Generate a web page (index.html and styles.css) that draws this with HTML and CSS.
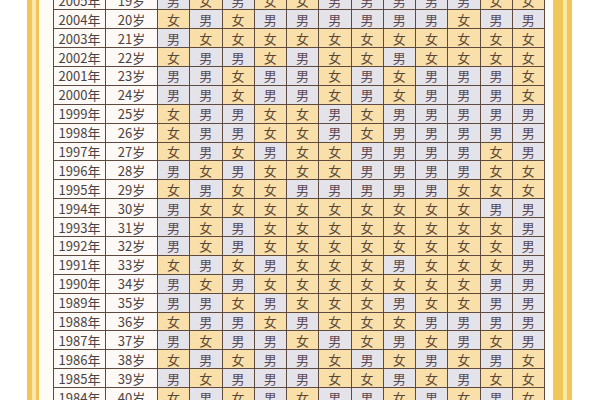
FILE: index.html
```html
<!DOCTYPE html>
<html lang="zh">
<head>
<meta charset="utf-8">
<title>清宫表</title>
<link rel="stylesheet" href="styles.css">
</head>
<body>
<div class="frame">
  <div class="band-outer-l"></div><div class="band-pale-l"></div><div class="band-inner-l"></div>
  <div class="inner">
    <div class="chart">
      <div class="y">2005年</div><div class="a">19岁</div><div class="m">男</div><div class="f">女</div><div class="m">男</div><div class="f">女</div><div class="f">女</div><div class="m">男</div><div class="m">男</div><div class="m">男</div><div class="m">男</div><div class="m">男</div><div class="f">女</div><div class="f">女</div>
      <div class="y">2004年</div><div class="a">20岁</div><div class="f">女</div><div class="m">男</div><div class="f">女</div><div class="m">男</div><div class="m">男</div><div class="m">男</div><div class="m">男</div><div class="m">男</div><div class="m">男</div><div class="f">女</div><div class="m">男</div><div class="m">男</div>
      <div class="y">2003年</div><div class="a">21岁</div><div class="m">男</div><div class="f">女</div><div class="f">女</div><div class="f">女</div><div class="f">女</div><div class="f">女</div><div class="f">女</div><div class="f">女</div><div class="f">女</div><div class="f">女</div><div class="f">女</div><div class="f">女</div>
      <div class="y">2002年</div><div class="a">22岁</div><div class="f">女</div><div class="m">男</div><div class="m">男</div><div class="f">女</div><div class="m">男</div><div class="f">女</div><div class="f">女</div><div class="m">男</div><div class="f">女</div><div class="f">女</div><div class="f">女</div><div class="f">女</div>
      <div class="y">2001年</div><div class="a">23岁</div><div class="m">男</div><div class="m">男</div><div class="f">女</div><div class="m">男</div><div class="m">男</div><div class="f">女</div><div class="m">男</div><div class="f">女</div><div class="m">男</div><div class="m">男</div><div class="m">男</div><div class="f">女</div>
      <div class="y">2000年</div><div class="a">24岁</div><div class="m">男</div><div class="m">男</div><div class="f">女</div><div class="m">男</div><div class="m">男</div><div class="f">女</div><div class="m">男</div><div class="f">女</div><div class="m">男</div><div class="m">男</div><div class="m">男</div><div class="f">女</div>
      <div class="y">1999年</div><div class="a">25岁</div><div class="f">女</div><div class="m">男</div><div class="m">男</div><div class="f">女</div><div class="f">女</div><div class="m">男</div><div class="f">女</div><div class="m">男</div><div class="m">男</div><div class="m">男</div><div class="m">男</div><div class="m">男</div>
      <div class="y">1998年</div><div class="a">26岁</div><div class="f">女</div><div class="m">男</div><div class="m">男</div><div class="f">女</div><div class="f">女</div><div class="m">男</div><div class="f">女</div><div class="m">男</div><div class="m">男</div><div class="m">男</div><div class="m">男</div><div class="m">男</div>
      <div class="y">1997年</div><div class="a">27岁</div><div class="f">女</div><div class="m">男</div><div class="f">女</div><div class="m">男</div><div class="f">女</div><div class="f">女</div><div class="m">男</div><div class="m">男</div><div class="m">男</div><div class="m">男</div><div class="f">女</div><div class="m">男</div>
      <div class="y">1996年</div><div class="a">28岁</div><div class="m">男</div><div class="f">女</div><div class="m">男</div><div class="f">女</div><div class="f">女</div><div class="f">女</div><div class="m">男</div><div class="m">男</div><div class="m">男</div><div class="m">男</div><div class="f">女</div><div class="f">女</div>
      <div class="y">1995年</div><div class="a">29岁</div><div class="f">女</div><div class="m">男</div><div class="f">女</div><div class="f">女</div><div class="m">男</div><div class="m">男</div><div class="m">男</div><div class="m">男</div><div class="m">男</div><div class="f">女</div><div class="f">女</div><div class="f">女</div>
      <div class="y">1994年</div><div class="a">30岁</div><div class="m">男</div><div class="f">女</div><div class="f">女</div><div class="f">女</div><div class="f">女</div><div class="f">女</div><div class="f">女</div><div class="f">女</div><div class="f">女</div><div class="f">女</div><div class="m">男</div><div class="m">男</div>
      <div class="y">1993年</div><div class="a">31岁</div><div class="m">男</div><div class="f">女</div><div class="m">男</div><div class="f">女</div><div class="f">女</div><div class="f">女</div><div class="f">女</div><div class="f">女</div><div class="f">女</div><div class="f">女</div><div class="f">女</div><div class="m">男</div>
      <div class="y">1992年</div><div class="a">32岁</div><div class="m">男</div><div class="f">女</div><div class="m">男</div><div class="f">女</div><div class="f">女</div><div class="f">女</div><div class="f">女</div><div class="f">女</div><div class="f">女</div><div class="f">女</div><div class="f">女</div><div class="m">男</div>
      <div class="y">1991年</div><div class="a">33岁</div><div class="f">女</div><div class="m">男</div><div class="f">女</div><div class="m">男</div><div class="f">女</div><div class="f">女</div><div class="f">女</div><div class="m">男</div><div class="f">女</div><div class="f">女</div><div class="f">女</div><div class="m">男</div>
      <div class="y">1990年</div><div class="a">34岁</div><div class="m">男</div><div class="f">女</div><div class="m">男</div><div class="f">女</div><div class="f">女</div><div class="f">女</div><div class="f">女</div><div class="f">女</div><div class="f">女</div><div class="f">女</div><div class="m">男</div><div class="m">男</div>
      <div class="y">1989年</div><div class="a">35岁</div><div class="m">男</div><div class="m">男</div><div class="f">女</div><div class="m">男</div><div class="f">女</div><div class="f">女</div><div class="f">女</div><div class="m">男</div><div class="f">女</div><div class="f">女</div><div class="m">男</div><div class="m">男</div>
      <div class="y">1988年</div><div class="a">36岁</div><div class="f">女</div><div class="m">男</div><div class="m">男</div><div class="f">女</div><div class="m">男</div><div class="f">女</div><div class="f">女</div><div class="f">女</div><div class="m">男</div><div class="m">男</div><div class="m">男</div><div class="m">男</div>
      <div class="y">1987年</div><div class="a">37岁</div><div class="m">男</div><div class="f">女</div><div class="m">男</div><div class="m">男</div><div class="f">女</div><div class="m">男</div><div class="f">女</div><div class="m">男</div><div class="f">女</div><div class="m">男</div><div class="f">女</div><div class="m">男</div>
      <div class="y">1986年</div><div class="a">38岁</div><div class="f">女</div><div class="m">男</div><div class="f">女</div><div class="m">男</div><div class="m">男</div><div class="f">女</div><div class="m">男</div><div class="f">女</div><div class="m">男</div><div class="f">女</div><div class="m">男</div><div class="f">女</div>
      <div class="y">1985年</div><div class="a">39岁</div><div class="m">男</div><div class="f">女</div><div class="m">男</div><div class="m">男</div><div class="m">男</div><div class="f">女</div><div class="f">女</div><div class="m">男</div><div class="f">女</div><div class="m">男</div><div class="f">女</div><div class="f">女</div>
      <div class="y">1984年</div><div class="a">40岁</div><div class="f">女</div><div class="m">男</div><div class="f">女</div><div class="m">男</div><div class="f">女</div><div class="m">男</div><div class="m">男</div><div class="f">女</div><div class="m">男</div><div class="f">女</div><div class="m">男</div><div class="f">女</div>
    </div>
  </div>
  <div class="band-inner-r"></div><div class="band-pale-r"></div><div class="band-outer-r"></div>
</div>
</body>
</html>
```

FILE: styles.css
```css
html, body {
  margin: 0;
  padding: 0;
  background: #ffffff;
  overflow: hidden;
}

body {
  font-family: "Noto Sans CJK SC", "Noto Sans", sans-serif;
}

.frame {
  display: flex;
  margin-left: 27px;
  width: 546px;
  height: 400px;
  align-items: stretch;
}

.band-outer-l { width: 5px; background: #f1c75a; }
.band-pale-l { width: 4px; background: #fbe7a6; }
.band-inner-l { width: 3px; background: #f0c65c; }

.band-inner-r { width: 10px; background: #f1c75a; }
.band-pale-r { width: 4px; background: #fbe7a6; }
.band-outer-r { width: 5px; background: #f1c75a; }

.inner {
  background: #fefcf4;
  padding: 0 8px 0 14px;
  overflow: hidden;
}

.chart {
  margin-top: -9.6px;
  width: 492px;
  display: grid;
  grid-template-columns: 51px 51px repeat(12, 1fr);
  grid-auto-rows: 17.9px;
  gap: 1px;
  background: #5e4a3e;
  border: 1px solid #5e4a3e;
  box-sizing: border-box;
}

.chart > div {
  display: flex;
  align-items: center;
  justify-content: center;
  font-size: 13px;
  line-height: 1;
}

.y, .a {
  background: #fcf9f6;
  color: #4a4343;
}

.f {
  background: #f9dfaa;
  color: #5a4634;
}

.m {
  background: #e5e3ea;
  color: #5a4a55;
}
```
